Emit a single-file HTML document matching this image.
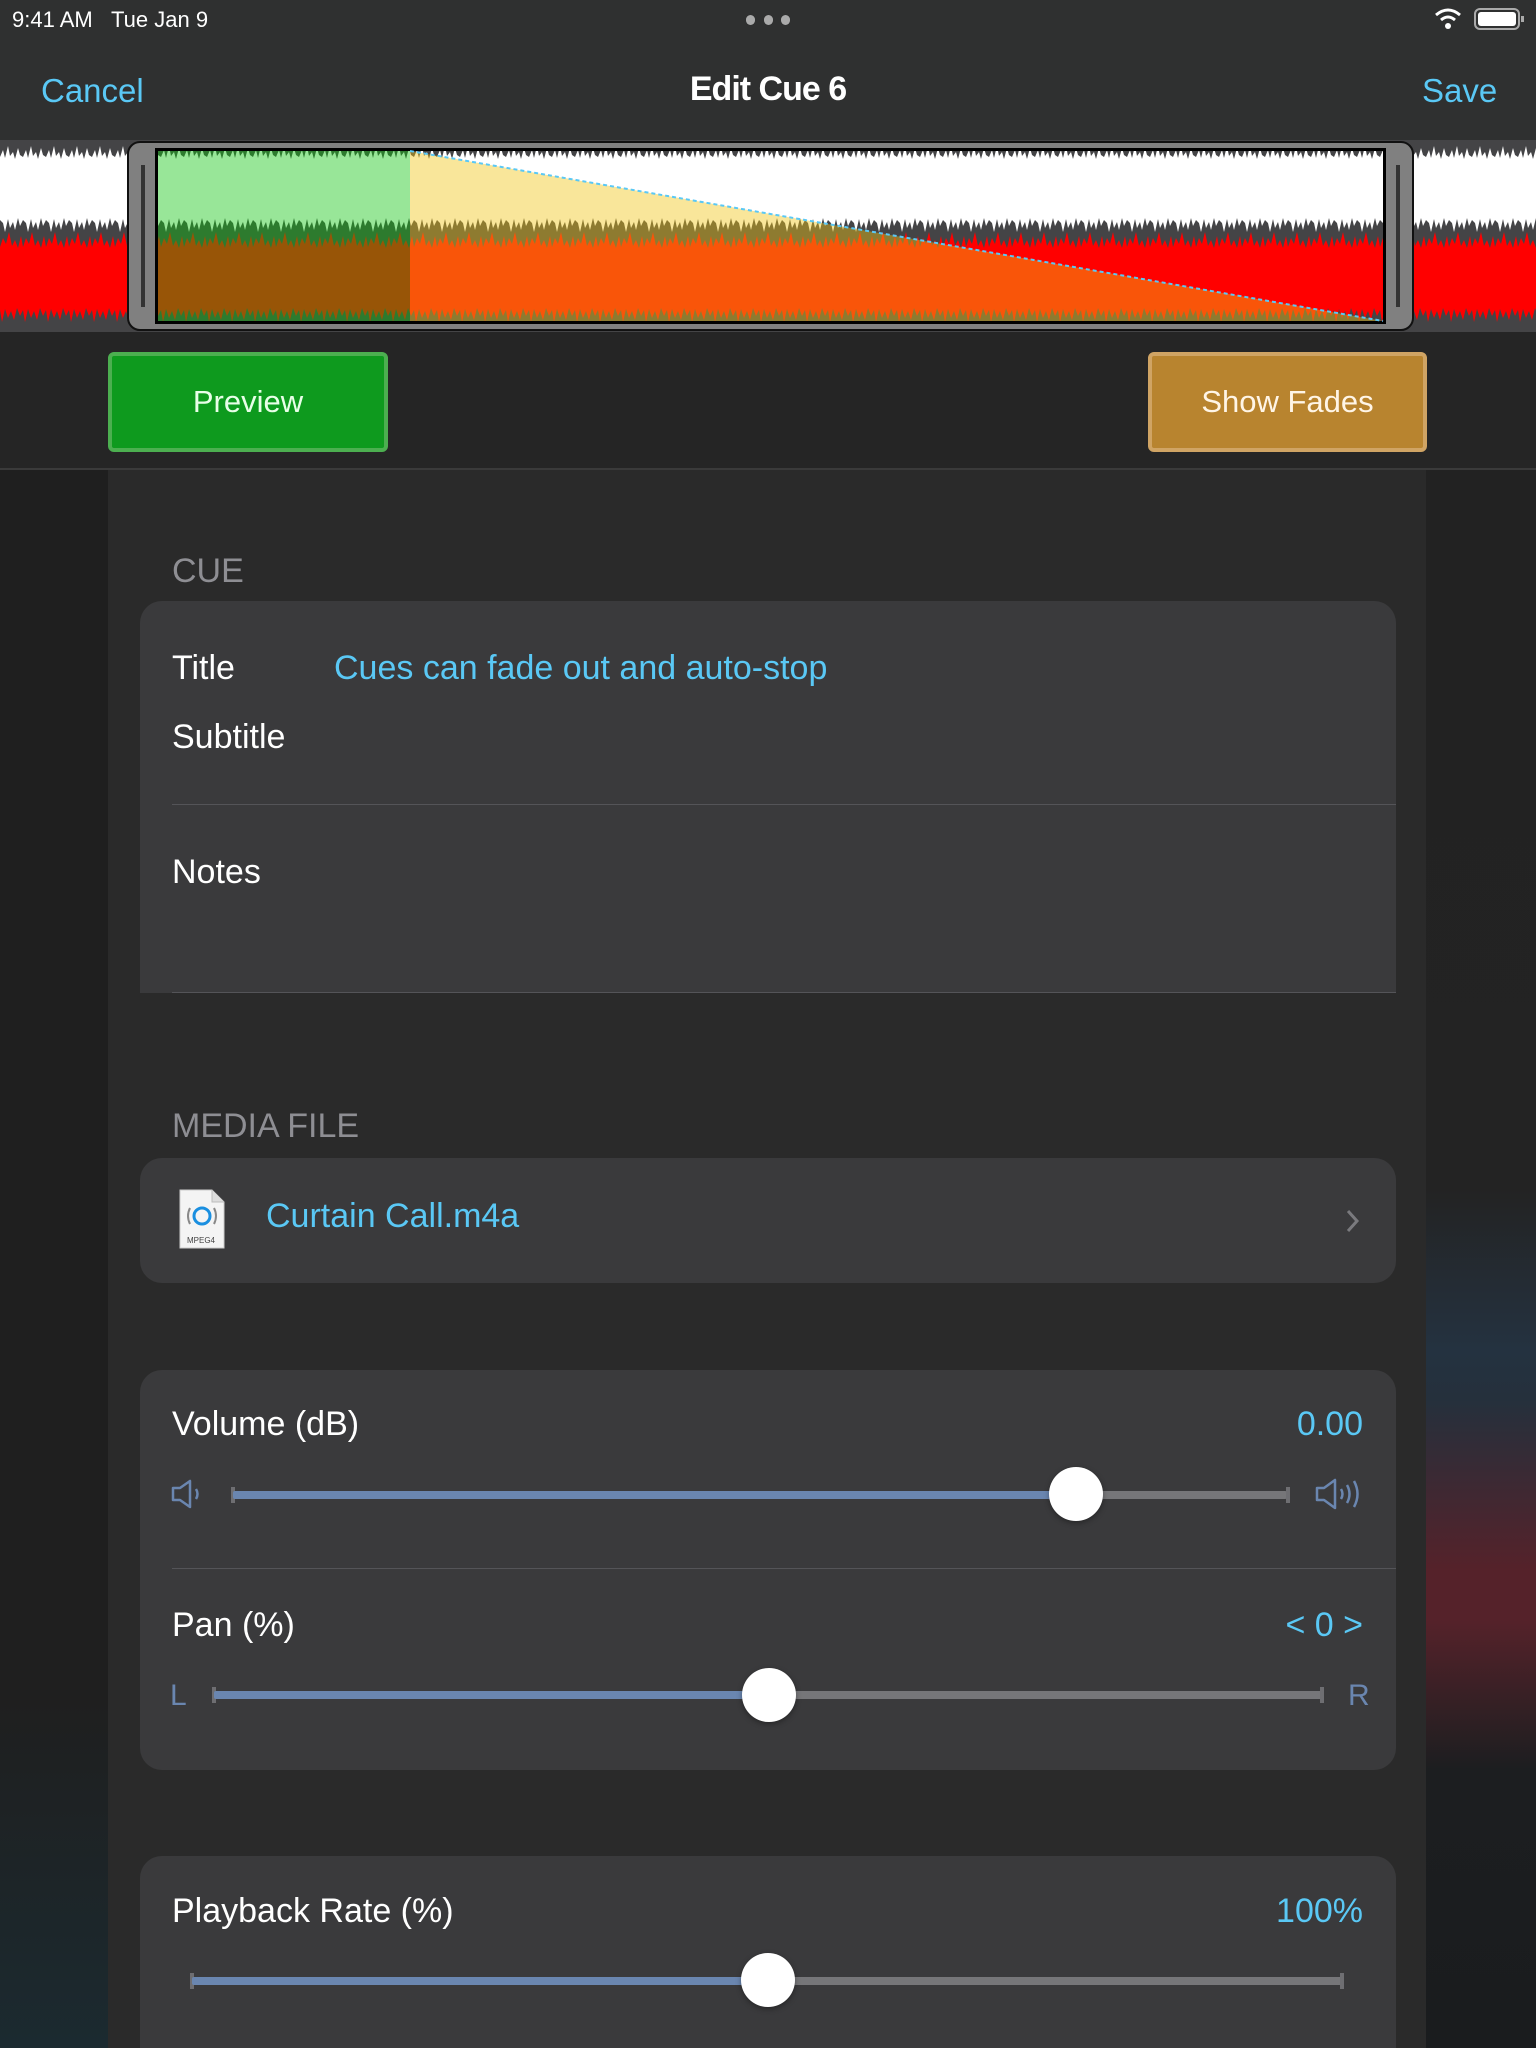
<!DOCTYPE html>
<html style="overflow:hidden;width:1536px;height:2048px"><head><meta charset="utf-8"><style>
*{margin:0;padding:0;box-sizing:border-box}
body{width:1536px;height:2048px;overflow:hidden;background:#1f1f1f;font-family:"Liberation Sans",sans-serif;position:relative;color:#fff}
.abs{position:absolute}
.t{position:absolute;white-space:nowrap;line-height:1}
.blue{color:#5ac8f5}
.card{position:absolute;left:140px;width:1256px;background:#3a3a3c;border-radius:22px}
.sep{position:absolute;height:1px;background:#545458}
.track{position:absolute;height:8px;border-radius:2px}
.thumb{position:absolute;width:54px;height:54px;border-radius:50%;background:#fff;box-shadow:0 2px 6px rgba(0,0,0,.35)}
.tick{position:absolute;width:4px;height:16px;background:#6e6e72}
</style></head><body>
<div class="abs" style="left:1426px;top:470px;width:110px;height:1578px;background:linear-gradient(180deg,#222 0px,#232323 720px,#243240 880px,#25303c 930px,#55222a 1100px,#55222a 1150px,#1c1e20 1300px,#1a1c1e 1578px)"></div>
<div class="abs" style="left:0;top:1700px;width:108px;height:348px;background:linear-gradient(180deg,#1f1f1f,#1b2a30)"></div>
<div class="abs" style="left:108px;top:470px;width:1318px;height:1578px;background:#2a2a2a"></div>
<div class="abs" style="left:0;top:0;width:1536px;height:140px;background:#2f3030"></div>
<div class="t" style="left:12px;top:9px;font-size:22px">9:41 AM&nbsp;&nbsp;&nbsp;Tue Jan 9</div>
<div class="abs" style="left:746px;top:15px;width:44px;height:10px;display:flex;justify-content:space-between">
<span style="width:9px;height:10px;border-radius:5px;background:#aaa"></span><span style="width:9px;height:10px;border-radius:5px;background:#aaa"></span><span style="width:9px;height:10px;border-radius:5px;background:#aaa"></span></div>
<svg class="abs" style="left:1434px;top:6px" width="100" height="26"><path d="M2 9 Q14 -1 26 9" stroke="#fff" stroke-width="3" fill="none"/><path d="M7 14 Q14 8 21 14" stroke="#fff" stroke-width="3" fill="none"/><circle cx="14" cy="20" r="3" fill="#fff"/><rect x="41" y="3" width="44" height="20" rx="5" stroke="#aaa" stroke-width="2" fill="none"/><rect x="44" y="6" width="38" height="14" rx="3" fill="#fff"/><rect x="87" y="10" width="3" height="6" fill="#aaa"/></svg>
<div class="t blue" style="left:41px;top:74px;font-size:33px">Cancel</div>
<div class="t" style="left:0;width:1536px;text-align:center;top:72px;font-size:34px;font-weight:bold;letter-spacing:-1px">Edit Cue 6</div>
<div class="t blue" style="left:1422px;top:74px;font-size:33px">Save</div>
<svg class="abs" style="left:0;top:140px" width="1536" height="192">
<defs>
<pattern id="jag" width="23" height="192" patternUnits="userSpaceOnUse">
<path d="M0 17 L3 10 L5 18 L8 6 L10 16 L13 12 L15 19 L18 8 L20 15 L23 17 V80 L20 86 L18 78 L15 90 L13 82 L10 88 L8 79 L5 92 L3 83 L0 80 Z" fill="#fff"/>
<path d="M0 107 L3 98 L6 104 L9 92 L12 106 L15 100 L18 108 L21 96 L23 107 V170 L20 176 L17 168 L14 180 L11 171 L8 178 L5 169 L2 182 L0 170 Z" fill="#ff0000"/>
</pattern>
</defs>
<rect x="0" y="0" width="1536" height="192" fill="#444446"/>
<rect x="0" y="0" width="1536" height="192" fill="url(#jag)"/>
<rect x="128" y="2" width="1285" height="188" rx="12" fill="#808080" stroke="#111" stroke-width="2"/>
<rect x="155" y="8" width="1231" height="176" fill="#000"/>
<rect x="158" y="11" width="1225" height="170" fill="#444446"/>
<rect x="158" y="11" width="1225" height="170" fill="url(#jag)"/>
<rect x="158" y="11" width="252" height="170" fill="rgba(17,197,17,0.43)"/>
<polygon points="410,11 1383,181 410,181" fill="rgba(242,198,21,0.43)"/>
<line x1="410" y1="11" x2="1383" y2="181" stroke="#5ac8f5" stroke-width="2" stroke-dasharray="4 3"/>
<rect x="141" y="25" width="4" height="142" fill="#333"/>
<rect x="1396" y="25" width="4" height="142" fill="#333"/>
</svg>
<div class="abs" style="left:0;top:332px;width:1536px;height:138px;background:#252525;border-bottom:2px solid #3a3a3a"></div>
<div class="abs" style="left:108px;top:352px;width:280px;height:100px;background:#0e9a1e;border:4px solid #4caf50;border-radius:6px"></div>
<div class="t" style="left:108px;width:280px;text-align:center;top:386px;font-size:31px;color:#e8ffe8">Preview</div>
<div class="abs" style="left:1148px;top:352px;width:279px;height:100px;background:#b8842f;border:4px solid #d0a464;border-radius:6px"></div>
<div class="t" style="left:1148px;width:279px;text-align:center;top:386px;font-size:31px;color:#fff5e6">Show Fades</div>
<div class="t" style="left:172px;top:554px;font-size:34px;color:#8e8e93">CUE</div>
<div class="card" style="top:601px;height:392px;border-radius:22px 22px 0 0"></div>
<div class="t" style="left:172px;top:651px;font-size:34px">Title</div>
<div class="t blue" style="left:334px;top:651px;font-size:34px">Cues can fade out and auto-stop</div>
<div class="t" style="left:172px;top:720px;font-size:34px">Subtitle</div>
<div class="sep" style="left:172px;top:804px;width:1224px"></div>
<div class="t" style="left:172px;top:855px;font-size:34px">Notes</div>
<div class="sep" style="left:172px;top:992px;width:1224px"></div>
<div class="t" style="left:172px;top:1109px;font-size:34px;color:#8e8e93">MEDIA FILE</div>
<div class="card" style="top:1158px;height:125px"></div>
<svg class="abs" style="left:178px;top:1188px" width="50" height="62"><path d="M2 2 H34 L46 14 V60 H2 Z" fill="#f4f4f4" stroke="#ccc"/><path d="M34 2 V14 H46" fill="#ddd" stroke="#bbb"/><circle cx="24" cy="28" r="8" fill="none" stroke="#1a8fe0" stroke-width="3"/><path d="M12 20 Q8 28 12 36 M36 20 Q40 28 36 36" stroke="#888" stroke-width="2" fill="none"/><text x="9" y="55" font-size="8" fill="#444" font-family="Liberation Sans">MPEG4</text></svg>
<div class="t blue" style="left:266px;top:1199px;font-size:34px">Curtain Call.m4a</div>
<svg class="abs" style="left:1345px;top:1208px" width="16" height="26"><path d="M3 3 L12 13 L3 23" stroke="#7a7a7e" stroke-width="3" fill="none"/></svg>
<div class="card" style="top:1370px;height:400px"></div>
<div class="t" style="left:172px;top:1407px;font-size:34px">Volume (dB)</div>
<div class="t blue" style="left:1163px;width:200px;text-align:right;top:1407px;font-size:34px">0.00</div>
<svg class="abs" style="left:170px;top:1478px" width="36" height="32"><path d="M3 10 H10 L20 3 V29 L10 22 H3 Z" stroke="#6a86b0" stroke-width="2.5" fill="none" stroke-linejoin="round"/><path d="M26 11 Q29 16 26 21" stroke="#6a86b0" stroke-width="2.5" fill="none"/></svg>
<div class="tick" style="left:231px;top:1487px"></div>
<div class="track" style="left:233px;top:1491px;width:842px;background:#6a86b0"></div>
<div class="track" style="left:1075px;top:1491px;width:212px;background:#767679"></div>
<div class="tick" style="left:1286px;top:1487px"></div>
<div class="thumb" style="left:1049px;top:1467px"></div>
<svg class="abs" style="left:1314px;top:1476px" width="52" height="36"><path d="M3 12 H10 L21 4 V32 L10 24 H3 Z" stroke="#6a86b0" stroke-width="2.5" fill="none" stroke-linejoin="round"/><path d="M27 13 Q30 18 27 23 M33 9 Q38 18 33 27 M40 5 Q47 18 40 31" stroke="#6a86b0" stroke-width="2.5" fill="none"/></svg>
<div class="sep" style="left:172px;top:1568px;width:1224px"></div>
<div class="t" style="left:172px;top:1608px;font-size:34px">Pan (%)</div>
<div class="t blue" style="left:1163px;width:200px;text-align:right;top:1608px;font-size:34px">&lt; 0 &gt;</div>
<div class="t" style="left:170px;top:1681px;font-size:30px;color:#6a86b0">L</div>
<div class="tick" style="left:212px;top:1687px"></div>
<div class="track" style="left:214px;top:1691px;width:554px;background:#6a86b0"></div>
<div class="track" style="left:768px;top:1691px;width:554px;background:#767679"></div>
<div class="tick" style="left:1320px;top:1687px"></div>
<div class="thumb" style="left:742px;top:1668px"></div>
<div class="t" style="left:1348px;top:1681px;font-size:30px;color:#6a86b0">R</div>
<div class="card" style="top:1856px;height:192px;border-radius:22px 22px 0 0"></div>
<div class="t" style="left:172px;top:1894px;font-size:34px">Playback Rate (%)</div>
<div class="t blue" style="left:1163px;width:200px;text-align:right;top:1894px;font-size:34px">100%</div>
<div class="tick" style="left:190px;top:1973px"></div>
<div class="track" style="left:192px;top:1977px;width:576px;background:#6a86b0"></div>
<div class="track" style="left:768px;top:1977px;width:574px;background:#767679"></div>
<div class="tick" style="left:1340px;top:1973px"></div>
<div class="thumb" style="left:741px;top:1953px"></div>
</body></html>
